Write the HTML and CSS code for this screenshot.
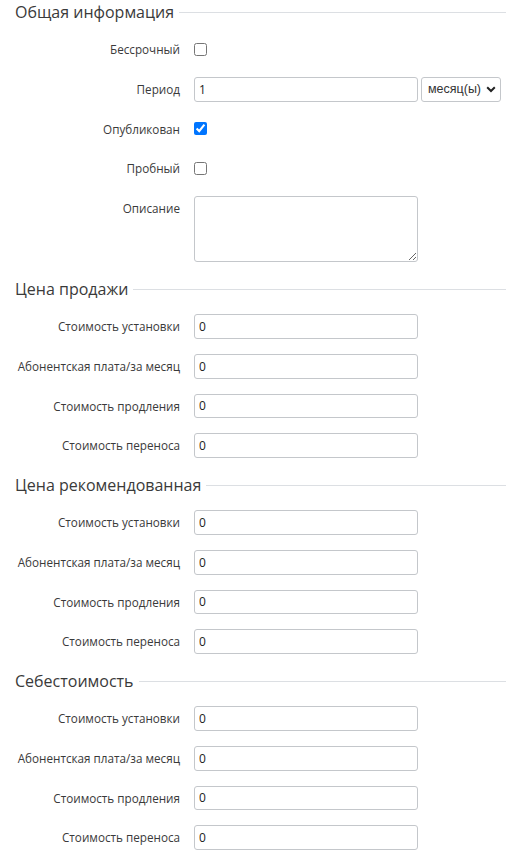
FILE: index.html
```html
<!DOCTYPE html>
<html lang="ru">
<head>
<meta charset="utf-8">
<title>Тариф</title>
<link rel="stylesheet" href="styles.css">
</head>
<body>
<form class="form">
  <section class="group">
    <div class="legend"><span class="legend-title">Общая информация</span><span class="legend-line"></span></div>
    <div class="row"><label class="label">Бессрочный</label><div class="control"><input type="checkbox" class="check"></div></div>
    <div class="row"><label class="label">Период</label><div class="control"><input type="text" class="input input-period" value="1"><span class="select-wrap"><select class="select"><option>месяц(ы)</option></select><svg class="select-arrow" width="10" height="7" viewBox="0 0 10 7"><path d="M1.2 1.3 L5 5 L8.8 1.3" fill="none" stroke="#222" stroke-width="2"/></svg></span></div></div>
    <div class="row"><label class="label">Опубликован</label><div class="control"><input type="checkbox" class="check" checked></div></div>
    <div class="row"><label class="label">Пробный</label><div class="control"><input type="checkbox" class="check"></div></div>
    <div class="row row-text"><label class="label">Описание</label><div class="control"><textarea class="textarea"></textarea></div></div>
  </section>
  <section class="group">
    <div class="legend"><span class="legend-title">Цена продажи</span><span class="legend-line"></span></div>
    <div class="row"><label class="label">Стоимость установки</label><div class="control"><input type="text" class="input" value="0"></div></div>
    <div class="row"><label class="label">Абонентская плата/за месяц</label><div class="control"><input type="text" class="input" value="0"></div></div>
    <div class="row"><label class="label">Стоимость продления</label><div class="control"><input type="text" class="input" value="0"></div></div>
    <div class="row"><label class="label">Стоимость переноса</label><div class="control"><input type="text" class="input" value="0"></div></div>
  </section>
  <section class="group">
    <div class="legend"><span class="legend-title">Цена рекомендованная</span><span class="legend-line"></span></div>
    <div class="row"><label class="label">Стоимость установки</label><div class="control"><input type="text" class="input" value="0"></div></div>
    <div class="row"><label class="label">Абонентская плата/за месяц</label><div class="control"><input type="text" class="input" value="0"></div></div>
    <div class="row"><label class="label">Стоимость продления</label><div class="control"><input type="text" class="input" value="0"></div></div>
    <div class="row"><label class="label">Стоимость переноса</label><div class="control"><input type="text" class="input" value="0"></div></div>
  </section>
  <section class="group">
    <div class="legend"><span class="legend-title">Себестоимость</span><span class="legend-line"></span></div>
    <div class="row"><label class="label">Стоимость установки</label><div class="control"><input type="text" class="input" value="0"></div></div>
    <div class="row"><label class="label">Абонентская плата/за месяц</label><div class="control"><input type="text" class="input" value="0"></div></div>
    <div class="row"><label class="label">Стоимость продления</label><div class="control"><input type="text" class="input" value="0"></div></div>
    <div class="row"><label class="label">Стоимость переноса</label><div class="control"><input type="text" class="input" value="0"></div></div>
  </section>
</form>
</body>
</html>
```
FILE: styles.css
```css
html, body {
  margin: 0;
  padding: 0;
  background: #fff;
}
body {
  font-family: "Open Sans", "DejaVu Sans", sans-serif;
  color: #333;
}
.form {
  display: block;
}
.group {
  display: block;
}
.legend {
  display: flex;
  align-items: center;
  height: 25px;
  padding-left: 15px;
  margin-bottom: 12.33px;
}
.legend-title {
  font-size: 16px;
  line-height: 25px;
  color: #3a3a3a;
  white-space: nowrap;
}
.legend-line {
  flex: 1;
  height: 0;
  border-top: 1px solid #dcdfe3;
  margin-left: 5px;
}
.row {
  display: flex;
  align-items: center;
  height: 24.67px;
  margin-bottom: 15px;
}
.row-text {
  height: 66px;
  align-items: flex-start;
}
.label {
  width: 180px;
  flex: none;
  text-align: right;
  font-size: 11.7px;
  line-height: 24.67px;
  color: #3a3a3a;
  white-space: nowrap;
}
.control {
  margin-left: 14px;
  display: flex;
  align-items: center;
  gap: 3px;
}
.check {
  margin: 0;
  width: 13px;
  height: 13px;
}
.input {
  box-sizing: border-box;
  width: 224px;
  height: 24.67px;
  margin: 0;
  border: 1px solid #c4c7cb;
  border-radius: 3px;
  padding: 0 4px;
  font-family: "Open Sans", sans-serif;
  font-size: 12px;
  color: #222;
  background: #fff;
  outline: none;
}
.select-wrap {
  position: relative;
  display: block;
  width: 80px;
  height: 24.67px;
}
.select {
  box-sizing: border-box;
  -webkit-appearance: none;
  appearance: none;
  display: block;
  width: 80px;
  height: 24.67px;
  margin: 0;
  border: 1px solid #c4c7cb;
  border-radius: 3px;
  padding: 0 18px 0 6px;
  font-family: "Liberation Sans", Arial, sans-serif;
  font-size: 12.5px;
  color: #333;
  background: #fff;
}
.select-arrow {
  position: absolute;
  right: 5px;
  top: 9px;
  pointer-events: none;
}
.textarea {
  box-sizing: border-box;
  display: block;
  width: 224px;
  height: 66px;
  margin: 0;
  border: 1px solid #c4c7cb;
  border-radius: 3px;
  padding: 4px 5px;
  font-family: "Open Sans", sans-serif;
  font-size: 12px;
  background: #fff;
  outline: none;
}
```
